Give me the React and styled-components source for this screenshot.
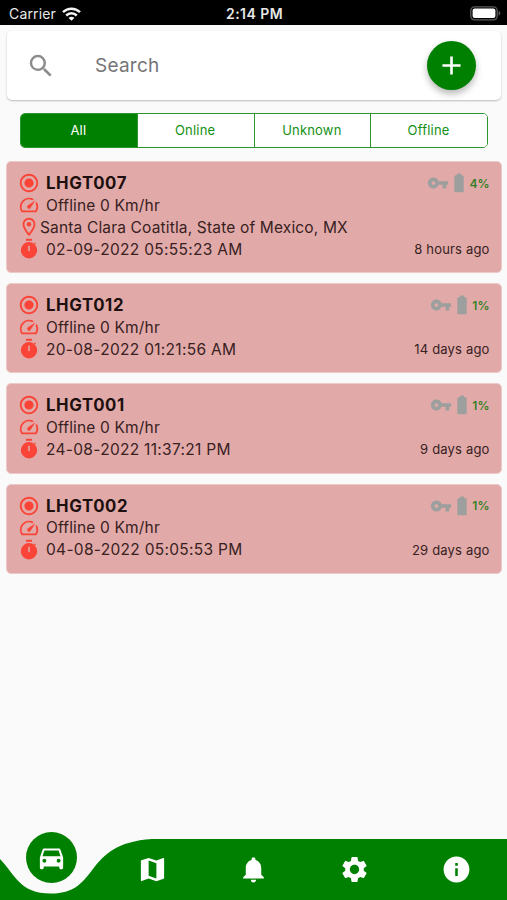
import React, { useState } from 'react';
import styled, { createGlobalStyle } from 'styled-components';
import {
  MdAdd,
  MdDirectionsCar,
  MdInfo,
  MdMap,
  MdNotifications,
  MdOutlineLocationOn,
  MdOutlineSpeed,
  MdRadioButtonChecked,
  MdSearch,
  MdSettings,
  MdVpnKey,
} from 'react-icons/md';

const GlobalStyle = createGlobalStyle`
  * {
    box-sizing: border-box;
  }

  body {
    margin: 0;
    background: #fafafa;
    font-family: Inter, "Liberation Sans", sans-serif;
  }
`;

const Screen = styled.div`
  display: flex;
  flex-direction: column;
  width: 507px;
  height: 900px;
  background: #fafafa;
  overflow: hidden;
`;

// Status bar
const StatusBar = styled.header`
  display: grid;
  grid-template-columns: 1fr auto 1fr;
  align-items: center;
  height: 25px;
  padding: 2px 6px 0 8px;
  background: #000;
  color: #e8e8e8;
  font-size: 14px;
  line-height: 20px;
`;

const Carrier = styled.div`
  display: flex;
  align-items: center;
  gap: 6px;
  padding-left: 1px;
  letter-spacing: 0.15px;
`;

const Clock = styled.div`
  font-size: 14px;
  font-weight: 600;
  letter-spacing: 0.45px;
`;

const Battery = styled.div`
  display: flex;
  justify-content: flex-end;
`;

// Search
const SearchCard = styled.div`
  display: flex;
  align-items: center;
  flex: none;
  height: 69px;
  margin: 6px 6px 0 7px;
  padding: 0 25px 0 19px;
  background: #fff;
  border-radius: 5px;
  box-shadow: 0 1px 2px rgba(0, 0, 0, 0.25);
  color: #8c8c8c;
  font-size: 30px;
`;

const SearchInput = styled.input`
  flex: 1;
  min-width: 0;
  margin-left: 39px;
  padding: 0;
  border: none;
  outline: none;
  background: none;
  color: #333;
  font-family: inherit;
  font-size: 19px;
  letter-spacing: 0.25px;

  &::placeholder {
    color: #757575;
    opacity: 1;
  }
`;

const AddButton = styled.button`
  display: flex;
  align-items: center;
  justify-content: center;
  width: 49px;
  height: 49px;
  padding: 0;
  border: none;
  border-radius: 50%;
  background: #008000;
  color: #fff;
  font-size: 31px;
  box-shadow: 0 4px 7px rgba(0, 0, 0, 0.28);
  cursor: pointer;
`;

// Filter tabs
const Segments = styled.div`
  display: flex;
  flex: none;
  height: 35px;
  margin: 13px 19px 0 20px;
  border: 1px solid #2c942c;
  border-radius: 5px;
  overflow: hidden;
`;

const Segment = styled.button`
  flex: 1;
  padding: 0 1px 1px 0;
  border: none;
  border-left: ${(props) => (props.$first ? 'none' : '1px solid #2c942c')};
  background: ${(props) => (props.$active ? '#008000' : '#fff')};
  color: ${(props) => (props.$active ? '#fff' : '#149014')};
  font-family: inherit;
  font-size: 13px;
  letter-spacing: 0.2px;
  cursor: pointer;
`;

// Device list
const List = styled.main`
  display: flex;
  flex: 1;
  flex-direction: column;
  gap: 10px;
  padding: 13px 5px 0 6px;
`;

const Card = styled.article`
  display: flex;
  justify-content: space-between;
  padding: 10px 11.5px 12.2px 11px;
  border: 1px solid #eccaca;
  border-radius: 5px;
  background: #e1aaa8;
  color: #38211f;
`;

const Info = styled.div`
  display: flex;
  flex-direction: column;
`;

const Line = styled.div`
  display: flex;
  align-items: center;
  gap: ${(props) => (props.$tight ? '0' : '6px')};
  height: 22px;
  font-size: 15.5px;
  letter-spacing: ${(props) => (props.$wide ? '0.3px' : '0.16px')};
  white-space: nowrap;

  svg {
    flex: none;
    width: 22px;
    height: 22px;
    color: #fa4437;
  }
`;

const Name = styled.strong`
  color: #1d100f;
  font-size: 16.8px;
  font-weight: 700;
  letter-spacing: 0.6px;
`;

const Side = styled.div`
  display: flex;
  flex-direction: column;
  align-items: flex-end;
  justify-content: space-between;
`;

const Power = styled.div`
  display: flex;
  align-items: center;
  height: 22px;
  color: #9c9f9d;
  font-size: 22px;
`;

const Percent = styled.span`
  margin-left: 0.5px;
  color: #358028;
  font-size: 12px;
  font-weight: 600;
`;

const Ago = styled.div`
  height: 22px;
  font-size: 13px;
  line-height: 22px;
  letter-spacing: 0.17px;
`;

// Bottom navigation
const NavBar = styled.nav`
  position: relative;
  display: flex;
  flex: none;
  height: 61px;
`;

const NavShape = styled.svg`
  position: absolute;
  top: 0;
  left: 0;
`;

const NavItem = styled.button`
  position: relative;
  display: flex;
  flex: 1;
  align-items: center;
  justify-content: center;
  padding: 0;
  border: none;
  background: none;
  color: #fff;
  font-size: 31px;
  cursor: pointer;
`;

const ActiveBubble = styled.span`
  position: absolute;
  top: -7.5px;
  left: 26px;
  display: flex;
  align-items: center;
  justify-content: center;
  width: 51px;
  height: 51px;
  border-radius: 50%;
  background: #008000;
`;

const filters = ['All', 'Online', 'Unknown', 'Offline'];

const devices = [
  {
    name: 'LHGT007',
    address: 'Santa Clara Coatitla, State of Mexico, MX',
    date: '02-09-2022 05:55:23 AM',
    battery: '4%',
    ago: '8 hours ago',
  },
  { name: 'LHGT012', date: '20-08-2022 01:21:56 AM', battery: '1%', ago: '14 days ago' },
  { name: 'LHGT001', date: '24-08-2022 11:37:21 PM', battery: '1%', ago: '9 days ago' },
  { name: 'LHGT002', date: '04-08-2022 05:05:53 PM', battery: '1%', ago: '29 days ago' },
];

const WifiIcon = () => (
  <svg width="19" height="14" viewBox="0 0 19 14" fill="none" stroke="#f4f4f4" strokeWidth="2.5">
    <path d="M1 5.2C5.8.5 13.2.5 18 5.2" />
    <path d="M4.2 8.5c3-2.9 7.6-2.9 10.6 0" />
    <path d="M9.5 13.8 6.6 10.9c1.6-1.5 4.2-1.5 5.8 0z" fill="#f4f4f4" stroke="none" />
  </svg>
);

const BatteryIcon = () => (
  <svg width="31" height="15" viewBox="0 0 31 15">
    <rect x="0.8" y="0.8" width="26.4" height="13" rx="3.8" fill="none" stroke="#5c5c5c" strokeWidth="1.3" />
    <rect x="2.6" y="2.6" width="22.8" height="9.4" rx="2" fill="#fff" />
    <path d="M28.6 5v4.6c1.1-.4 1.7-1.2 1.7-2.3S29.7 5.4 28.6 5z" fill="#5c5c5c" />
  </svg>
);

const StopwatchIcon = () => (
  <svg viewBox="0 0 22 22" fill="currentColor">
    <path d="M8 .8h6v2H8z" />
    <path
      fillRule="evenodd"
      d="M11 4a8.2 8.2 0 1 0 0 16.400 8.200 8.200 0 0 0 0-16.400zm-.8 3.700h1.600v4.700a.8.8 0 0 1-1.600 0z"
    />
    <path d="m15.800 5.400 1-1 1.200 1.200-1 1z" />
  </svg>
);

// Vertical battery with a sloped cap
const CellIcon = () => (
  <svg width="20" height="22" viewBox="0 0 20 22" fill="currentColor">
    <path d="M8.2 1.6h3.6v1l2.9 1.5v15.100c0 .6-.4 1-1 1H6.300c-.6 0-1-.4-1-1V4.100l2.900-1.500z" />
  </svg>
);

const DeviceCard = ({ device }) => (
  <Card>
    <Info>
      <Line>
        <MdRadioButtonChecked />
        <Name>{device.name}</Name>
      </Line>
      <Line>
        <MdOutlineSpeed />
        Offline 0 Km/hr
      </Line>
      {device.address && (
        <Line $tight>
          <MdOutlineLocationOn />
          {device.address}
        </Line>
      )}
      <Line $wide>
        <StopwatchIcon />
        {device.date}
      </Line>
    </Info>
    <Side>
      <Power>
        <MdVpnKey />
        <CellIcon />
        <Percent>{device.battery}</Percent>
      </Power>
      <Ago>{device.ago}</Ago>
    </Side>
  </Card>
);

const App = () => {
  const [filter, setFilter] = useState('All');
  const [search, setSearch] = useState('');

  return (
    <>
      <GlobalStyle />
      <Screen>
        <StatusBar>
          <Carrier>
            Carrier
            <WifiIcon />
          </Carrier>
          <Clock>2:14 PM</Clock>
          <Battery>
            <BatteryIcon />
          </Battery>
        </StatusBar>
        <SearchCard>
          <MdSearch />
          <SearchInput placeholder="Search" value={search} onChange={(e) => setSearch(e.target.value)} />
          <AddButton>
            <MdAdd />
          </AddButton>
        </SearchCard>
        <Segments>
          {filters.map((name, index) => (
            <Segment key={name} $first={index === 0} $active={name === filter} onClick={() => setFilter(name)}>
              {name}
            </Segment>
          ))}
        </Segments>
        <List>
          {devices.map((device) => (
            <DeviceCard key={device.name} device={device} />
          ))}
        </List>
        <NavBar>
          {/* Green bar with the notch under the active item */}
          <NavShape width="507" height="61" viewBox="0 0 507 61">
            <path
              fill="#008000"
              d="M-50.7 0C20.3 4.6 0 54.6 50.7 54.6S81.1 4.6 152.1 0H507V61H-50.7z"
            />
          </NavShape>
          <NavItem>
            <ActiveBubble>
              <MdDirectionsCar />
            </ActiveBubble>
          </NavItem>
          <NavItem>
            <MdMap />
          </NavItem>
          <NavItem>
            <MdNotifications />
          </NavItem>
          <NavItem>
            <MdSettings />
          </NavItem>
          <NavItem>
            <MdInfo />
          </NavItem>
        </NavBar>
      </Screen>
    </>
  );
};

export default App;
